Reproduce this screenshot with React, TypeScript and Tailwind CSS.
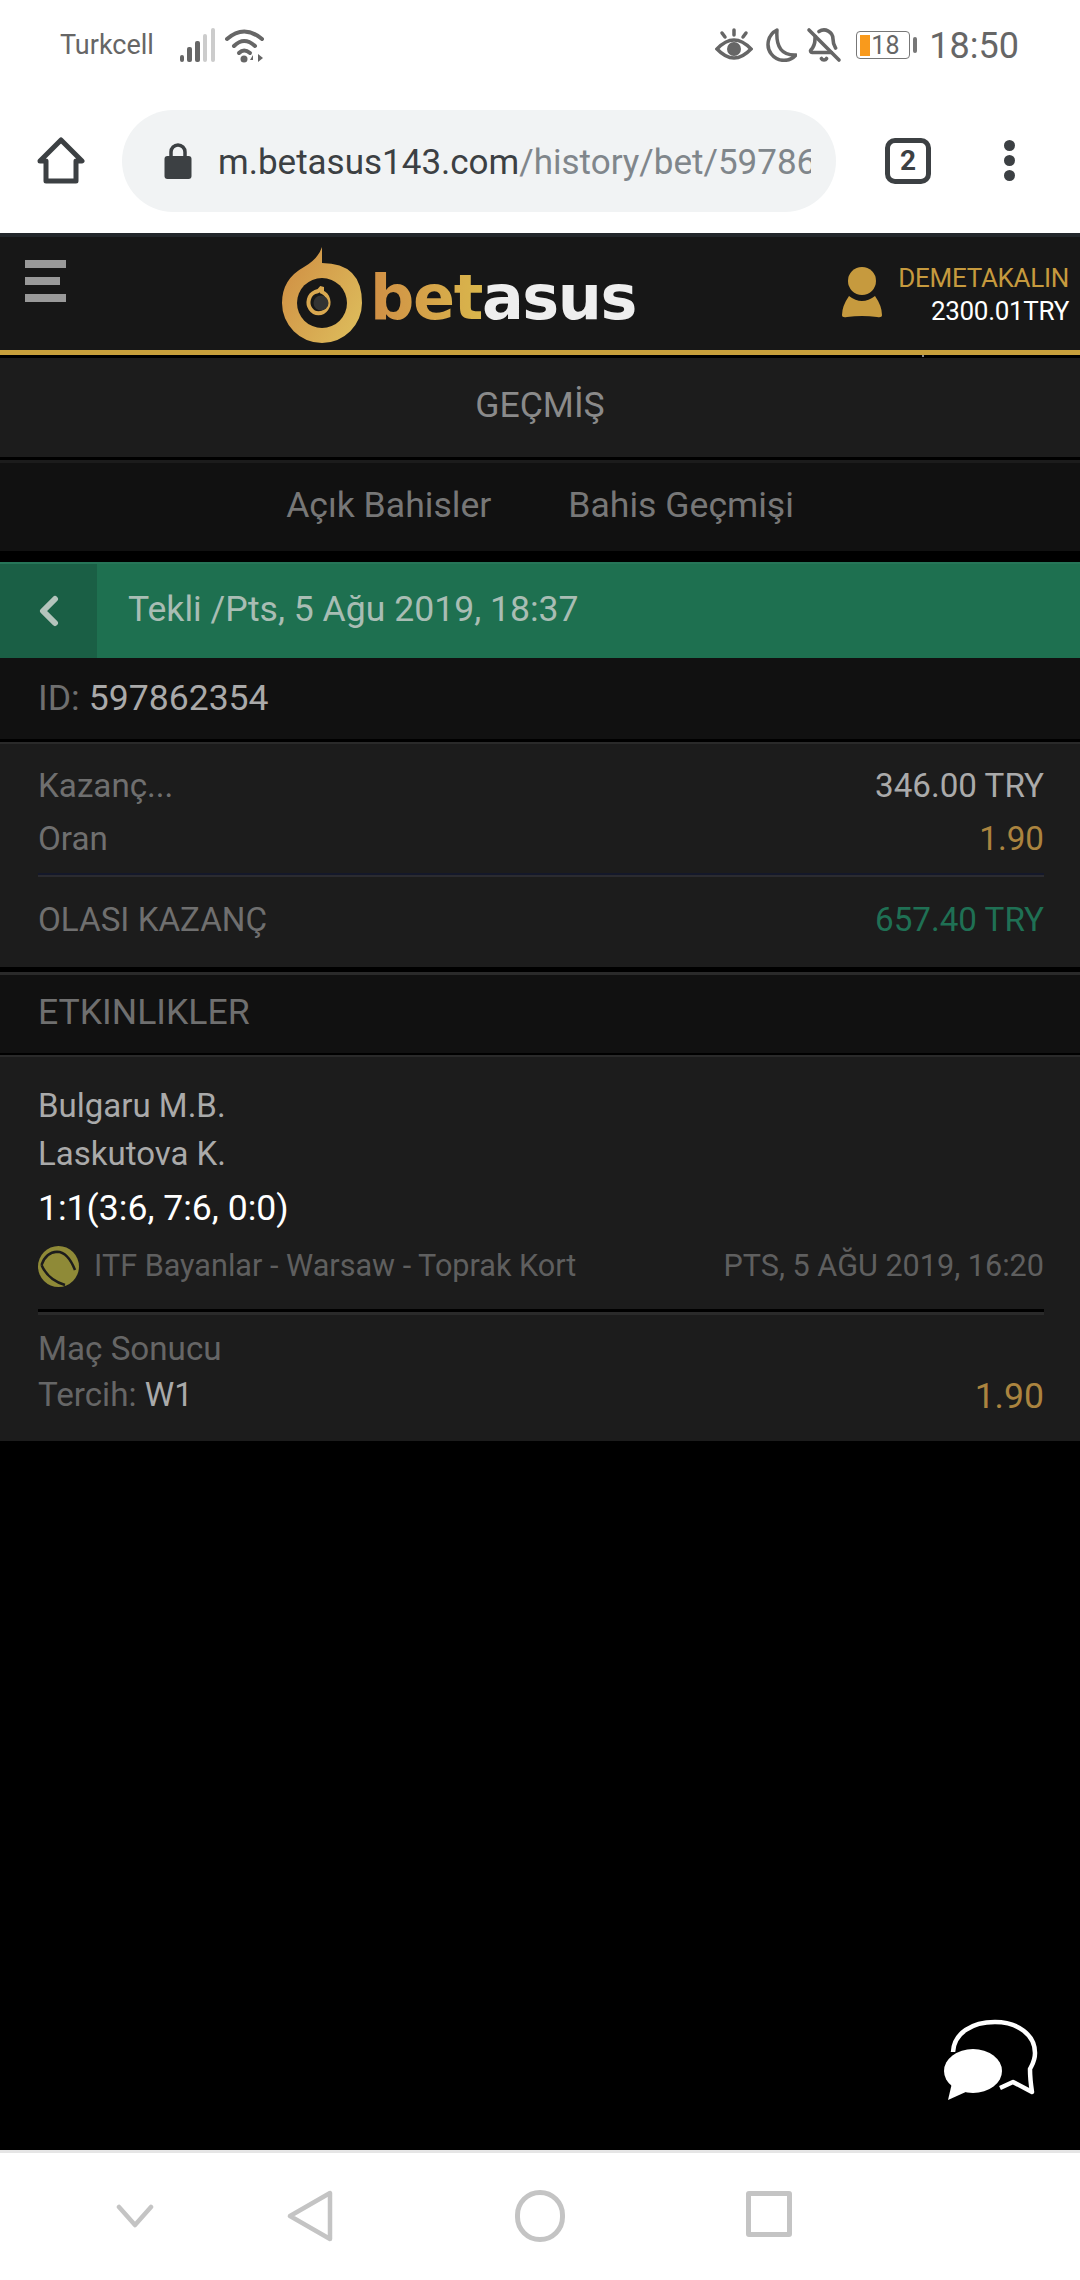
import { BellOff } from "lucide-react";

const StatusBar = () => (
  <div className="flex h-[90px] items-center pl-[60px] pr-[61px] text-[#666]">
    <span className="text-[27px] leading-none">Turkcell</span>
    <svg className="ml-[25px]" width="36" height="34" viewBox="0 0 36 34">
      <rect x="1" y="27" width="4" height="7" rx="2" fill="#666" />
      <rect x="8" y="19" width="5" height="15" rx="2" fill="#666" />
      <rect x="16" y="13" width="5" height="21" rx="2" fill="#666" />
      <rect x="24" y="6" width="4" height="28" rx="2" fill="#ccc" />
      <rect x="32" y="0" width="4" height="34" rx="2" fill="#ccc" />
    </svg>
    <svg className="ml-[10px]" width="40" height="36" viewBox="0 0 40 36" fill="none" stroke="#666" strokeWidth="4" strokeLinecap="round">
      <path d="M2 12 Q19 -3 37 12" />
      <path d="M9 19 Q19 9 30 19" />
      <path d="M14 26 Q19 21 25 26" />
      <circle cx="19" cy="32" r="3.5" fill="#666" stroke="none" />
      <path d="M28 35 V28 L25 33 H28 Z M33 27 V35 L38 31 Z" fill="#666" stroke="none" />
    </svg>
    <svg className="ml-auto" width="38" height="34" viewBox="0 0 38 34" fill="none" stroke="#666" strokeWidth="3.5" strokeLinecap="round">
      <path d="M2 21 Q19 3 36 21 Q19 39 2 21 Z" />
      <circle cx="19" cy="21" r="7" fill="#666" stroke="none" />
      <path d="M19 2 V7 M7 5 L10 9 M31 5 L28 9" />
    </svg>
    <svg className="ml-[10px]" width="34" height="34" viewBox="0 0 34 34" fill="none" stroke="#666" strokeWidth="3.5" strokeLinejoin="round">
      <path d="M14 2 A16 16 0 1 0 33 27 Q12 28 14 2 Z" />
    </svg>
    <BellOff className="ml-[9px]" size={36} strokeWidth={2.4} color="#666" />
    <div className="ml-[14px] flex h-[28px] w-[54px] items-center rounded-[4px] border border-[#777] pl-[3px]">
      <div className="h-[21px] w-[10px] bg-[#f99a1c]" />
      <span className="ml-[1px] text-[25px] leading-none">18</span>
    </div>
    <div className="ml-[3px] h-[16px] w-[4px] rounded-sm bg-[#777]" />
    <span className="ml-[12px] mt-[2px] text-[36px] leading-none">18:50</span>
  </div>
);

const BrowserBar = () => (
  <div className="flex h-[143px] items-start pt-[20px]">
    <svg className="ml-[37px] mt-[27px]" width="48" height="48" viewBox="0 0 48 48" fill="none" stroke="#3c4043" strokeWidth="5" strokeLinejoin="round" strokeLinecap="round">
      <path d="M3 24 L24 3 L45 24 H39 V44 H9 V24 Z" />
    </svg>
    <div className="ml-[37px] flex h-[102px] w-[714px] items-center rounded-full bg-[#f1f3f4] pl-[42px]">
      <svg width="28" height="36" viewBox="0 0 28 36">
        <path d="M7 15 V9 A7 7 0 0 1 21 9 V15" fill="none" stroke="#3c4043" strokeWidth="3.5" />
        <rect x="0.5" y="13" width="27" height="23" rx="3" fill="#3c4043" />
      </svg>
      <div className="ml-[26px] mt-[3px] w-[593px] overflow-hidden whitespace-nowrap text-[35px] leading-[44px] text-[#80868b]">
        <span className="text-[#3c4043]">m.betasus143.com</span>/history/bet/59786
      </div>
    </div>
    <div className="ml-[49px] mt-[28px] flex h-[46px] w-[46px] items-center justify-center rounded-[10px] border-[5px] border-[#3c4043] text-[28px] font-bold leading-none text-[#3c4043]">
      2
    </div>
    <div className="ml-[73px] mt-[30px] flex flex-col gap-[4px]">
      <div className="h-[11px] w-[11px] rounded-full bg-[#3c4043]" />
      <div className="h-[11px] w-[11px] rounded-full bg-[#3c4043]" />
      <div className="h-[11px] w-[11px] rounded-full bg-[#3c4043]" />
    </div>
  </div>
);

const Logo = () => (
  <div className="ml-[214px] mt-[8px] flex items-start self-start">
    <svg width="84" height="100" viewBox="0 0 84 100">
      <defs>
        <linearGradient id="ring" x1="0" y1="0" x2="1" y2="0.7">
          <stop offset="0" stopColor="#cf8c42" />
          <stop offset="1" stopColor="#dcb95a" />
        </linearGradient>
      </defs>
      <path d="M42 2 L42 18 Q82 18 82 58 A40 40 0 0 1 2 58 Q2 34 24 22 Q38 14 42 2 Z" fill="url(#ring)" />
      <circle cx="42" cy="58" r="25" fill="#171717" />
      <path d="M42 42 L42 47 A10 11 0 1 1 35 47 Q40 46 42 42 Z" fill="none" stroke="#d9a850" strokeWidth="4" />
      <circle cx="41" cy="58" r="7.5" fill="#333" />
    </svg>
    <div className="ml-[6px] mt-[18px] font-['DejaVu_Sans',sans-serif] text-[62px] font-bold leading-[70px] tracking-[-1.4px]">
      <span className="bg-gradient-to-r from-[#d08f45] to-[#d9b64c] bg-clip-text text-transparent">bet</span>
      <span className="text-[#eeeeee]">asus</span>
    </div>
  </div>
);

const Header = () => (
  <div className="flex h-[122px] items-start border-t-[4px] border-b-[5px] border-t-[#23272b] border-b-[#c8a03c] bg-[#171717]">
    <div className="ml-[25px] mt-[23px] flex w-[41px] flex-col gap-[9px]">
      <div className="h-[8px] w-[41px] bg-[#999]" />
      <div className="h-[8px] w-[35px] bg-[#999]" />
      <div className="h-[8px] w-[41px] bg-[#999]" />
    </div>
    <Logo />
    <svg className="ml-auto mt-[29px]" width="42" height="52" viewBox="0 0 42 52" fill="#c69a3e">
      <circle cx="21" cy="15" r="14" />
      <path d="M8 30 Q21 40 34 30 Q41 40 41 49 Q41 52 36 51 Q21 49 6 51 Q1 52 1 49 Q1 40 8 30 Z" />
    </svg>
    <div className="ml-[15px] mr-[11px] mt-[25px] flex flex-col items-end text-[26px] leading-[33px] tracking-[-0.3px]">
      <span className="text-[#c69a3e]">DEMETAKALIN</span>
      <span className="text-white">2300.01TRY</span>
    </div>
  </div>
);

const Row = ({ left, right, rightClass }: { left: string; right: string; rightClass: string }) => (
  <div className="flex justify-between pl-[38px] pr-[36px] text-[33.2px] leading-[53px]">
    <span className="text-[#6f6f6f]">{left}</span>
    <span className={rightClass}>{right}</span>
  </div>
);

const TennisBall = () => (
  <svg width="41" height="41" viewBox="0 0 41 41" fill="none">
    <circle cx="20.5" cy="20.5" r="20.5" fill="#8f8a37" />
    <path d="M3.5 19 Q8 6 19 5.7 Q30 6 37 24 M3.5 19 Q10 34 27 39" stroke="#1c1c1c" strokeWidth="2.5" />
  </svg>
);

const BetDetails = () => (
  <div className="relative flex-1 bg-black">
    <div className="absolute left-[922px] top-0 h-[2px] w-[2px] bg-[#888]" />
    <div className="mt-[3px] flex h-[99px] items-center justify-center bg-[#1c1c1c] pb-[4px] text-[35.6px] text-[#8a8a8a]">
      GEÇMİŞ
    </div>
    <div className="mt-[3px] flex h-[91px] items-center justify-center gap-[77px] border-t-[3px] border-t-[#1c1c1c] bg-[#111] pb-[2px] text-[35.6px] text-[#777]">
      <span>Açık Bahisler</span>
      <span>Bahis Geçmişi</span>
    </div>
    <div className="mt-[11px] flex h-[96px] items-stretch border-t-2 border-t-[#267558] bg-[#1e7050] text-[35.6px] text-[#a9bdb4]">
      <div className="flex w-[97px] items-center bg-[#1a5f45] pl-[39px]">
        <svg width="20" height="32" viewBox="0 0 20 32" fill="none" stroke="#b4c4bc" strokeWidth="6" strokeLinecap="round" strokeLinejoin="round">
          <path d="M16 4 L4 16 L16 28" />
        </svg>
      </div>
      <span className="ml-[31px] self-center pb-[3px]">Tekli /Pts, 5 Ağu 2019, 18:37</span>
    </div>
    <div className="flex h-[81px] items-center bg-[#111] px-[38px] text-[35.6px]">
      <span className="text-[#6f6f6f]">ID:</span>
      <span className="ml-[9px] text-[#aaa]">597862354</span>
    </div>
    <div className="mt-[3px] h-[225px] border-t-2 border-t-[#2a2a2a] bg-[#1c1c1c] pt-[15px]">
      <Row left="Kazanç..." right="346.00 TRY" rightClass="text-[#aaa]" />
      <Row left="Oran" right="1.90" rightClass="text-[#ab843f]" />
      <div className="ml-[38px] mr-[36px] mt-[8px] h-[4px] border-b-2 border-b-[#2b2b30] bg-[#14182a]" />
      <div className="mt-[16px]">
        <Row left="OLASI KAZANÇ" right="657.40 TRY" rightClass="text-[#1f7054]" />
      </div>
    </div>
    <div className="mt-[5px] flex h-[81px] items-center border-t-[3px] border-t-[#2a2a2a] bg-[#111] px-[38px] pb-[3px] text-[35.6px] text-[#6f6f6f]">
      ETKINLIKLER
    </div>
    <div className="mt-[2px] h-[386px] border-t-2 border-t-[#2a2a2a] bg-[#1c1c1c] pl-[38px] pr-[36px] pt-[25px]">
      <div className="text-[33px] leading-[48px] text-[#aaa]">Bulgaru M.B.</div>
      <div className="text-[33px] leading-[48px] text-[#aaa]">Laskutova K.</div>
      <div className="mt-[2px] text-[35.6px] leading-[56px] text-white">1:1(3:6, 7:6, 0:0)</div>
      <div className="mt-[8px] flex h-[44px] items-center text-[30.6px] text-[#5f5f5f]">
        <TennisBall />
        <span className="ml-[15px]">ITF Bayanlar - Warsaw - Toprak Kort</span>
        <span className="ml-auto">PTS, 5 AĞU 2019, 16:20</span>
      </div>
      <div className="mt-[21px] h-[6px] border-b-[3px] border-t-[3px] border-b-[#2a2a2a] border-t-black" />
      <div className="mt-[12px] text-[33.2px] leading-[44px] text-[#666]">Maç Sonucu</div>
      <div className="flex items-center justify-between leading-[44px]">
        <span className="text-[33.2px] text-[#666]">
          Tercih: <span className="text-[#aaa]">W1</span>
        </span>
        <span className="mt-[3px] text-[35.6px] text-[#ab843f]">1.90</span>
      </div>
    </div>
    <svg className="absolute left-[940px] top-[1664px]" width="100" height="84" viewBox="0 0 100 84" fill="none">
      <path d="M13 33 C14 14 32 3 55 3 C78 3 95 16 95 34 C95 42 92 46 90 50 C90 56 90 60 92 73 L73 63 L60 69" stroke="#fff" strokeWidth="4.5" strokeLinejoin="round" />
      <ellipse cx="33" cy="52" rx="29" ry="22" fill="#fff" />
      <path d="M12 64 L8 81 L28 72 Z" fill="#fff" />
    </svg>
  </div>
);

const NavBar = () => (
  <div className="flex h-[130px] items-start border-t-[3px] border-t-[#e5e5e5] bg-white pl-[116px] pt-[37px]">
    <svg className="mt-[14px]" width="38" height="24" viewBox="0 0 38 24" fill="none" stroke="#c4c4c4" strokeWidth="4.5" strokeLinecap="round" strokeLinejoin="round">
      <path d="M3 3 L19 21 L35 3" />
    </svg>
    <svg className="ml-[133px]" width="46" height="52" viewBox="0 0 46 52" fill="none" stroke="#c4c4c4" strokeWidth="4.5" strokeLinejoin="round">
      <path d="M43 3 V49 L3 26 Z" />
    </svg>
    <div className="ml-[182px] h-[52px] w-[50px] rounded-full border-[5px] border-[#c4c4c4]" />
    <div className="ml-[181px] mt-[1px] h-[46px] w-[46px] rounded-[3px] border-[5px] border-[#c4c4c4]" />
  </div>
);

const App = () => {
  return (
    <div className="flex h-[2280px] w-[1080px] flex-col overflow-hidden bg-white font-[Roboto,sans-serif]">
      <StatusBar />
      <BrowserBar />
      <Header />
      <BetDetails />
      <NavBar />
    </div>
  );
};

export default App;
